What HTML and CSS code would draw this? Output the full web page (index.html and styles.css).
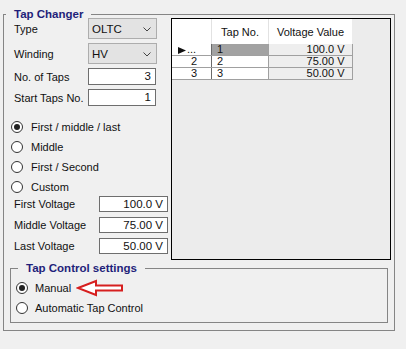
FILE: index.html
```html
<!DOCTYPE html>
<html lang="en">
<head>
  <meta charset="UTF-8">
  <title>Tap Changer</title>
  <link rel="stylesheet" href="styles.css">
</head>
<body>
  <fieldset class="group main">
    <legend>Tap Changer</legend>
    <div class="top">
      <div class="left">
        <div class="row combo-row">
          <label>Type</label>
          <div class="combo"><span>OLTC</span>
            <svg width="8" height="5" viewBox="0 0 8 5"><polyline points="0.5,0.5 4,4 7.5,0.5" fill="none" stroke="#444" stroke-width="1"/></svg>
          </div>
        </div>
        <div class="row combo-row">
          <label>Winding</label>
          <div class="combo"><span>HV</span>
            <svg width="8" height="5" viewBox="0 0 8 5"><polyline points="0.5,0.5 4,4 7.5,0.5" fill="none" stroke="#444" stroke-width="1"/></svg>
          </div>
        </div>
        <div class="row text-row">
          <label>No. of Taps</label>
          <div class="box">3</div>
        </div>
        <div class="row text-row">
          <label>Start Taps No.</label>
          <div class="box">1</div>
        </div>

        <div class="radios">
          <div class="radio"><span class="dot checked"></span>First / middle / last</div>
          <div class="radio"><span class="dot"></span>Middle</div>
          <div class="radio"><span class="dot"></span>First / Second</div>
          <div class="radio"><span class="dot"></span>Custom</div>
        </div>

        <div class="volts">
          <div class="row volt-row">
            <label>First Voltage</label>
            <div class="box wide">100.0 V</div>
          </div>
          <div class="row volt-row">
            <label>Middle Voltage</label>
            <div class="box wide">75.00 V</div>
          </div>
          <div class="row volt-row">
            <label>Last Voltage</label>
            <div class="box wide">50.00 V</div>
          </div>
        </div>
      </div>

      <div class="grid">
        <table>
          <thead>
            <tr>
              <th class="rh"></th>
              <th class="c-tap">Tap No.</th>
              <th class="c-volt">Voltage Value</th>
            </tr>
          </thead>
          <tbody>
            <tr>
              <td class="rh current"><svg class="arrow" width="8" height="7" viewBox="0 0 8 7"><polygon points="0,0 8,3.5 0,7" fill="#111"/></svg>...</td>
              <td class="c-tap selected">1</td>
              <td class="c-volt">100.0 V</td>
            </tr>
            <tr>
              <td class="rh">2</td>
              <td class="c-tap">2</td>
              <td class="c-volt">75.00 V</td>
            </tr>
            <tr>
              <td class="rh">3</td>
              <td class="c-tap">3</td>
              <td class="c-volt">50.00 V</td>
            </tr>
          </tbody>
        </table>
      </div>
    </div>

    <fieldset class="group control">
      <legend>Tap Control settings</legend>
      <div class="radio"><span class="dot checked"></span>Manual
        <svg class="pointer" width="48" height="18" viewBox="0 0 48 18">
          <polygon points="2,9 20,2 20,6.5 46,6.5 46,11.5 20,11.5 20,16" fill="#fff" stroke="#d61f1f" stroke-width="2" stroke-linejoin="miter"/>
        </svg>
      </div>
      <div class="radio"><span class="dot"></span>Automatic Tap Control</div>
    </fieldset>
  </fieldset>
</body>
</html>
```

FILE: styles.css
```css
body {
  margin: 0;
  padding: 8px 0 0 3px;
  background: #f0f0f0;
  font-family: "Liberation Sans", Arial, sans-serif;
  font-size: 11px;
  color: #111;
}
.group {
  margin: 0;
  padding: 0;
  border: 1px solid #858585;
  min-width: 0;
}
.group legend {
  margin-left: 2px;
  padding: 0 8px;
  font-size: 11.5px;
  line-height: 12px;
  font-weight: bold;
  color: #1f1f7a;
}
.main {
  width: 392px;
  height: 323px;
  box-sizing: border-box;
}
.top {
  display: flex;
  margin-top: -2px;
}
.left {
  width: 167px;
  padding-left: 10px;
  box-sizing: border-box;
}
.row {
  display: flex;
  align-items: center;
}
.row label {
  width: 74px;
}
.combo-row {
  height: 21px;
  margin-bottom: 4px;
}
.combo {
  width: 69px;
  height: 21px;
  box-sizing: border-box;
  background: #e3e3e3;
  border: 1px solid #adadad;
  display: flex;
  align-items: center;
  justify-content: space-between;
  padding: 0 5px 0 3px;
  font-size: 11.5px;
}
.combo svg {
  margin-top: 1px;
}
.text-row {
  height: 17px;
  margin-bottom: 4px;
}
.box {
  width: 68px;
  height: 17px;
  box-sizing: border-box;
  background: #fff;
  border: 1px solid #6e6e6e;
  text-align: right;
  padding-right: 4px;
  line-height: 15px;
  font-size: 11.5px;
}
.radios {
  margin-top: 11px;
  margin-left: -3px;
}
.radio {
  display: flex;
  align-items: center;
  height: 20px;
}
.dot {
  width: 12px;
  height: 12px;
  box-sizing: border-box;
  border: 1px solid #333;
  border-radius: 50%;
  background: #fff;
  margin-right: 8px;
  display: flex;
  align-items: center;
  justify-content: center;
}
.dot.checked::after {
  content: "";
  width: 6px;
  height: 6px;
  border-radius: 50%;
  background: #222;
}
.volts {
  margin-top: -1px;
}
.volt-row {
  height: 16px;
  margin-bottom: 5px;
}
.volt-row label {
  width: 85px;
}
.box.wide {
  width: 69px;
  height: 16px;
  line-height: 14px;
}
.grid {
  width: 220px;
  height: 242px;
  box-sizing: border-box;
  border: 1px solid #000;
  background: #ececec;
}
.grid table {
  border-collapse: collapse;
  font-size: 11px;
}
.grid th {
  height: 25px;
  padding: 0;
  background: #fff;
  font-weight: normal;
  text-align: center;
  border-left: 1px solid #e2e2e2;
}
.grid th.rh {
  border-left: none;
}
.grid td {
  height: 11px;
  padding: 0;
  line-height: 11px;
  border: 1px solid #a0a0a0;
}
.grid tbody tr:first-child td {
  border-top: none;
}
.rh {
  width: 39px;
  background: #fff;
  text-align: right;
}
.grid td.rh {
  border-left: none;
  border-right: 1px solid #6a6a6a;
  padding-right: 14px;
  box-sizing: border-box;
}
.grid td.rh.current {
  text-align: left;
  padding-left: 6px;
  padding-right: 0;
}
.arrow {
  margin-right: 1px;
  vertical-align: -1px;
}
.c-tap {
  width: 56px;
}
.grid td.c-tap {
  background: #fff;
  text-align: left;
  padding-left: 5px;
  box-sizing: border-box;
}
.grid td.c-tap.selected {
  background: #a2a2a2;
}
.c-volt {
  width: 83px;
}
.grid td.c-volt {
  background: #eeeeee;
  text-align: right;
  padding-right: 7px;
  box-sizing: border-box;
}
.control {
  width: 378px;
  height: 61px;
  box-sizing: border-box;
  margin: 2px 0 0 6px;
  padding: 4px 0 0 5px;
}
.control .radio {
  height: 20px;
}
.control .dot {
  margin-right: 7px;
}
.pointer {
  margin-left: 5px;
}
```
